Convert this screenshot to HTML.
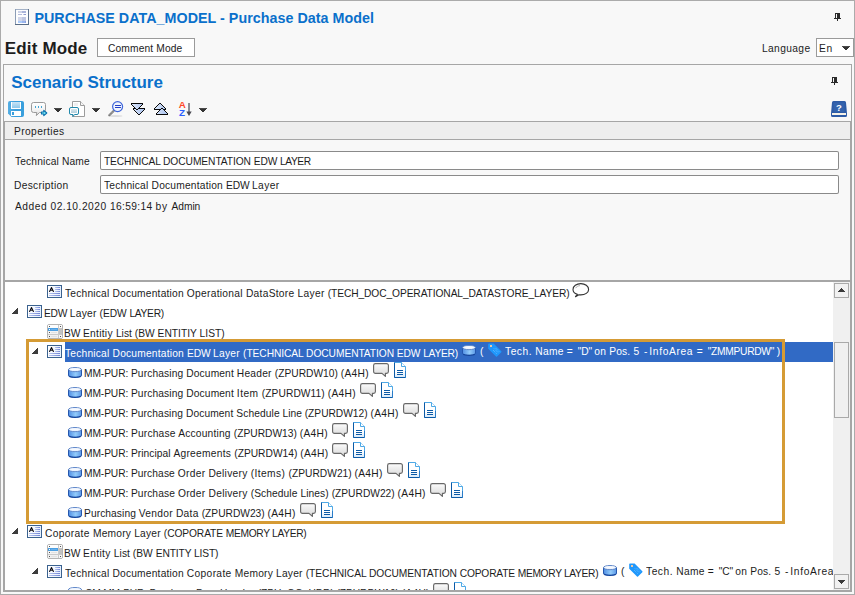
<!DOCTYPE html>
<html lang="en">
<head>
<meta charset="utf-8">
<title>PURCHASE DATA_MODEL - Purchase Data Model</title>
<style>
html,body{margin:0;padding:0}
body{width:855px;height:595px;overflow:hidden;background:#f8f8f8;font-family:"Liberation Sans",sans-serif;font-size:11px;position:relative}
div,ul,li{margin:0;padding:0;box-sizing:border-box}
.win,.hdr,.modebar,.panel,.toolbar,.propbox,.treebox,.tree,.sb,.btn,.sel,.inp,.selrow,.prophead,.hl,.sbb,.sbt{position:absolute}
.win{background:#f8f8f8;box-shadow:inset 0 0 0 1px #ababab;overflow:hidden}
.t{position:absolute;white-space:pre;line-height:20px;height:20px;color:#1c1c1c;transform:scaleX(.93);transform-origin:0 0}
.h1{font-size:14.3px;font-weight:bold;transform:none}
.h2{font-size:17px;font-weight:bold;transform:none}
.bl{color:#0a70cb}
.wh{color:#fff}
.i{position:absolute;overflow:visible}
button{margin:0;padding:0;border:0;font:inherit;display:block}
.btn{box-shadow:inset 0 0 0 1px #9a9a9a;background:#fff}
.sel{box-shadow:inset 0 0 0 1px #9a9a9a;background:#fff}
.inp{box-shadow:inset 0 0 0 1px #8a8a8a;border-radius:2px;background:#fff}
.panel{box-shadow:inset 0 0 0 1px #a6a6a6}
.propbox{box-shadow:inset 1px 1px 0 0 #a6a6a6,inset -1px 0 0 0 #a6a6a6}
.prophead{background:#eeeeee;box-shadow:inset 0 -1px 0 0 #a6a6a6}
.treebox{box-shadow:inset 0 2px 0 0 #a6a6a6,inset 0 0 0 1px #a6a6a6;background:#fff}
.tree{overflow:hidden;background:#fff}
.tree ul{list-style:none}
.selrow{background:#316ac5}
.hl{border:3px solid #d59b35}
.sb{background:#f0f0f0}
.sbb{box-shadow:inset 0 0 0 1px #a9a9a9;background:#f1f1f1}
.sbt{box-shadow:inset 0 0 0 1px #a9a9a9;background:#f0f0f0}
</style>
</head>
<body>
<svg width="0" height="0" style="position:absolute" aria-hidden="true"><defs><linearGradient id="gm1" x1="0" y1="0" x2="0" y2="1"><stop offset="0" stop-color="#ffffff"/><stop offset=".25" stop-color="#f2f2f2"/><stop offset="1" stop-color="#dadada"/></linearGradient><linearGradient id="gt1" gradientUnits="userSpaceOnUse" x1="0" y1="0" x2="14" y2="0"><stop offset="0" stop-color="#e4f0ff"/><stop offset=".45" stop-color="#c6d6f4"/><stop offset="1" stop-color="#a9c3f0"/></linearGradient><linearGradient id="gc1" x1="0" y1="0" x2="0" y2="1"><stop offset="0" stop-color="#ffffff"/><stop offset=".55" stop-color="#f4f4f4"/><stop offset="1" stop-color="#dcdcdc"/></linearGradient><linearGradient id="gp1" x1="0" y1="0" x2="0" y2="1"><stop offset="0" stop-color="#dbe8ee"/><stop offset="1" stop-color="#b3d0dd"/></linearGradient><linearGradient id="gy1" x1="0" y1="0" x2="1" y2="0"><stop offset="0" stop-color="#4f8de2"/><stop offset=".55" stop-color="#93ccfb"/><stop offset="1" stop-color="#5b97e6"/></linearGradient><linearGradient id="gd1" x1="0" y1="0" x2="0" y2="1"><stop offset="0" stop-color="#ffffff"/><stop offset=".6" stop-color="#ffffff"/><stop offset="1" stop-color="#d6e9fa"/></linearGradient><linearGradient id="gn1" x1="0" y1="0" x2="1" y2="0"><stop offset="0" stop-color="#b9c8f2"/><stop offset="1" stop-color="#6f82d4"/></linearGradient><linearGradient id="gn2" x1="0" y1="0" x2="1" y2="0"><stop offset="0" stop-color="#ffffff"/><stop offset="1" stop-color="#e4eefc"/></linearGradient><linearGradient id="gs1" x1="0" y1="0" x2="0" y2="1"><stop offset="0" stop-color="#c9e4f6"/><stop offset="1" stop-color="#8cc7ea"/></linearGradient><linearGradient id="gs2" x1="0" y1="0" x2="1" y2="0"><stop offset="0" stop-color="#55aee3"/><stop offset=".5" stop-color="#379cdb"/><stop offset="1" stop-color="#3aa0dd"/></linearGradient></defs></svg>
<div class="win" style="left:0px;top:0px;width:855px;height:595px">
<div class="hdr" style="left:1px;top:1px;width:853px;height:31px"><svg class="i" style="left:14px;top:8px" width="14" height="16" viewBox="0 0 14 16"><rect width="14" height="16" fill="#fdfdfe"/><path d="M0 0h14v1h-14z" fill="#a3b1c6" shape-rendering="crispEdges"/><path d="M0 0h1v16h-1z" fill="#8c9db6" shape-rendering="crispEdges"/><path d="M13 0h1v16h-1z" fill="#5c718d" shape-rendering="crispEdges"/><path d="M0 15h14v1h-14z" fill="#586c86" shape-rendering="crispEdges"/><path d="M3 2h4v2h-4z" fill="#cdd3e8" shape-rendering="crispEdges"/><path d="M7 2h4v2h-4z" fill="#aab4da" shape-rendering="crispEdges"/><path d="M3 5h4v1h-4z" fill="#b3bbdb" shape-rendering="crispEdges"/><path d="M8 5h1v1h-1z" fill="#c3cae4" shape-rendering="crispEdges"/><path d="M9 5h2v1h-2z" fill="#8f9cd1" shape-rendering="crispEdges"/><path d="M3 8h4v4h-4z" fill="#d2d7ea" shape-rendering="crispEdges"/><path d="M7 8h4v4h-4z" fill="#bfc6e1" shape-rendering="crispEdges"/><path d="M3 12h4v2h-4z" fill="#abcbfa" shape-rendering="crispEdges"/><path d="M7 12h3v2h-3z" fill="#9ab5ee" shape-rendering="crispEdges"/><path d="M10 12h1v2h-1z" fill="#8a9fe0" shape-rendering="crispEdges"/></svg><span class="t h1 bl" style="left:33.4px;top:7px;letter-spacing:0.03px">PURCHASE DATA_MODEL - Purchase Data Model</span><svg class="i" style="left:833px;top:12px" width="7" height="8" viewBox="0 0 7 8"><path d="M1 0h5v1h-5zM1 1h1v4h-1zM3 1h3v4h-3zM0 5h7v1h-7zM3 6h1v2h-1z" fill="#2b2b2b" shape-rendering="crispEdges"/></svg></div>
<div class="modebar" style="left:1px;top:32px;width:853px;height:30px"><span class="t h2" style="left:3.8px;top:7px;letter-spacing:0.15px">Edit Mode</span><button class="btn" style="left:96px;top:6px;width:98px;height:19px"><span class="t" style="left:11.1px;top:0px;letter-spacing:0.14px">Comment Mode</span></button><span class="t" style="left:761.2px;top:6px;letter-spacing:0.4px">Language</span><div class="sel" style="left:815px;top:6px;width:38px;height:19px"><span class="t" style="left:3.2px;top:0px;letter-spacing:0.67px">En</span><svg class="i" style="left:26px;top:8px" width="8" height="4" viewBox="0 0 8 4"><path d="M0 0h8v1h-8z" fill="#4a4a4a" shape-rendering="crispEdges"/><path d="M1 1h6v1h-6zM2 2h4v1h-4zM3 3h2v1h-2z" fill="#333" shape-rendering="crispEdges"/></svg></div></div>
<div class="panel" style="left:3px;top:64px;width:849px;height:528px">
<span class="t h2 bl" style="left:8.3px;top:9px;letter-spacing:-0.03px">Scenario Structure</span><svg class="i" style="left:828px;top:13px" width="7" height="8" viewBox="0 0 7 8"><path d="M1 0h5v1h-5zM1 1h1v4h-1zM3 1h3v4h-3zM0 5h7v1h-7zM3 6h1v2h-1z" fill="#2b2b2b" shape-rendering="crispEdges"/></svg>
<div class="toolbar" style="left:1px;top:34px;width:847px;height:22px"><svg class="i" style="left:4px;top:3px" width="16" height="16" viewBox="0 0 16 16"><path d="M2 0h12a2 2 0 0 1 2 2v12a2 2 0 0 1-2 2H3.500L0 12.500V2a2 2 0 0 1 2-2z" fill="url(#gs2)"/><path d="M3 1h10v7H3z" fill="#fff"/><path d="M4 1h8v6H4z" fill="url(#gs1)"/><path d="M3 10h10v5H3z" fill="#fff"/><path d="M4 11h2v3H4z" fill="#3a9edc"/></svg><svg class="i" style="left:27px;top:4px" width="17" height="15" viewBox="0 0 17 15"><path d="M2.500 .5h10a2 2 0 0 1 2 2v6a2 2 0 0 1-2 2H8.500L5.300 13.600L5.800 10.500H2.500a2 2 0 0 1-2-2v-6a2 2 0 0 1 2-2z" fill="url(#gc1)" stroke="#9a9a9a"/><path d="M4 4h1v2h-1zM7 4h1v2h-1zM10 4h1v2h-1z" fill="#45a5d3" shape-rendering="crispEdges"/><path d="M10.500 10h2.300V8.300l3 2.700l-3 2.700V12h-2.300z" fill="#7eeef4" stroke="#0b6fae" stroke-width="1.100" stroke-linejoin="round"/></svg><svg class="i" style="left:50px;top:10px" width="8" height="4" viewBox="0 0 8 4"><path d="M0 0h8v1h-8z" fill="#4a4a4a" shape-rendering="crispEdges"/><path d="M1 1h6v1h-6zM2 2h4v1h-4zM3 3h2v1h-2z" fill="#333" shape-rendering="crispEdges"/></svg><svg class="i" style="left:65px;top:3px" width="16" height="16" viewBox="0 0 16 16"><path d="M3.500 .5h8l4 4v11h-12z" fill="#fff" stroke="#9c9c9c"/><path d="M11.500 .5v4h4" fill="#f6f6f6" stroke="#9c9c9c"/><rect x="5" y="2" width="4" height="3" fill="#efefef"/><path d="M2 6.500h6a1.500 1.500 0 0 1 1.500 1.500v4a1.500 1.500 0 0 1-1.500 1.500H5.500L4 15.500V13.500H2a1.500 1.500 0 0 1-1.500-1.500v-4A1.500 1.500 0 0 1 2 6.500z" fill="#fff" stroke="#2088ab"/><rect x="2" y="8" width="6" height="4" fill="url(#gp1)"/></svg><svg class="i" style="left:88px;top:10px" width="8" height="4" viewBox="0 0 8 4"><path d="M0 0h8v1h-8z" fill="#4a4a4a" shape-rendering="crispEdges"/><path d="M1 1h6v1h-6zM2 2h4v1h-4zM3 3h2v1h-2z" fill="#333" shape-rendering="crispEdges"/></svg><svg class="i" style="left:104px;top:3px" width="16" height="16" viewBox="0 0 16 16"><ellipse cx="7.500" cy="15" rx="7" ry="1" fill="#000" opacity=".10"/><path d="M5.800 9.700L1.300 14.200" stroke="#7d7d7d" stroke-width="2.200" stroke-linecap="round"/><path d="M5.500 10L1.500 14" stroke="#d8d8d8" stroke-width=".8" stroke-dasharray="1 1"/><circle cx="9.600" cy="5.600" r="5" fill="#f1f5fc" stroke="#3f66da" stroke-width="1.200"/><path d="M7 4h6v1h-6zM7 6h6v1h-6z" fill="#2340c8" shape-rendering="crispEdges"/></svg><svg class="i" style="left:127px;top:5px" width="14" height="12" viewBox="0 0 14 12"><path d="M3 6h10v1h-10zM4 7h8v1h-8zM5 8h6v1h-6zM6 9h4v1h-4zM7 10h2v1h-2z" fill="url(#gt1)" shape-rendering="crispEdges"/><path d="M2 5h12v1h-12zM2 6h1v1h-1zM13 6h1v1h-1zM3 7h1v1h-1zM12 7h1v1h-1zM4 8h1v1h-1zM11 8h1v1h-1zM5 9h1v1h-1zM10 9h1v1h-1zM6 10h1v1h-1zM9 10h1v1h-1zM7 11h1v1h-1zM8 11h1v1h-1z" fill="#0a0a0a" shape-rendering="crispEdges"/><path d="M1 1h10v1h-10zM2 2h8v1h-8zM3 3h6v1h-6zM4 4h4v1h-4zM5 5h2v1h-2z" fill="url(#gt1)" shape-rendering="crispEdges"/><path d="M0 0h12v1h-12zM0 1h1v1h-1zM11 1h1v1h-1zM1 2h1v1h-1zM10 2h1v1h-1zM2 3h1v1h-1zM9 3h1v1h-1zM3 4h1v1h-1zM8 4h1v1h-1zM4 5h1v1h-1zM7 5h1v1h-1zM5 6h1v1h-1zM6 6h1v1h-1z" fill="#0a0a0a" shape-rendering="crispEdges"/></svg><svg class="i" style="left:150px;top:5px" width="14" height="12" viewBox="0 0 14 12"><path d="M5 1h2v1h-2zM4 2h4v1h-4zM3 3h6v1h-6zM2 4h8v1h-8zM1 5h10v1h-10z" fill="url(#gt1)" shape-rendering="crispEdges"/><path d="M5 0h1v1h-1zM6 0h1v1h-1zM4 1h1v1h-1zM7 1h1v1h-1zM3 2h1v1h-1zM8 2h1v1h-1zM2 3h1v1h-1zM9 3h1v1h-1zM1 4h1v1h-1zM10 4h1v1h-1zM0 5h1v1h-1zM11 5h1v1h-1zM0 6h12v1h-12z" fill="#0a0a0a" shape-rendering="crispEdges"/><path d="M7 6h2v1h-2zM6 7h4v1h-4zM5 8h6v1h-6zM4 9h8v1h-8zM3 10h10v1h-10z" fill="url(#gt1)" shape-rendering="crispEdges"/><path d="M7 5h1v1h-1zM8 5h1v1h-1zM6 6h1v1h-1zM9 6h1v1h-1zM5 7h1v1h-1zM10 7h1v1h-1zM4 8h1v1h-1zM11 8h1v1h-1zM3 9h1v1h-1zM12 9h1v1h-1zM2 10h1v1h-1zM13 10h1v1h-1zM2 11h12v1h-12z" fill="#0a0a0a" shape-rendering="crispEdges"/></svg><svg class="i" style="left:175px;top:3px" width="14" height="16" viewBox="0 0 14 16"><text x="-.2" y="7" font-family="Liberation Sans, sans-serif" font-weight="bold" font-size="9.800" fill="#ff4526">A</text><text x="0" y="15" font-family="Liberation Sans, sans-serif" font-weight="bold" font-size="9.800" fill="#2c5eff">Z</text><path d="M9 2h2v9h-2z" fill="#8c8c94" shape-rendering="crispEdges"/><path d="M7.300 10.500h5.400L10 15z" fill="#4a4a52"/></svg><svg class="i" style="left:195px;top:10px" width="8" height="4" viewBox="0 0 8 4"><path d="M0 0h8v1h-8z" fill="#4a4a4a" shape-rendering="crispEdges"/><path d="M1 1h6v1h-6zM2 2h4v1h-4zM3 3h2v1h-2z" fill="#333" shape-rendering="crispEdges"/></svg><svg class="i" style="left:827px;top:3px" width="16" height="16" viewBox="0 0 16 16"><path d="M2.500 0h11a1.500 1.500 0 0 1 1.500 1.500L16 12.500v2a1.500 1.500 0 0 1-1.500 1.500h-13A1.500 1.500 0 0 1 0 14.500v-2L1 1.500A1.500 1.500 0 0 1 2.500 0z" fill="#2d5ba6"/><path d="M2.500 1.500h11v9.500h-11z" fill="#3463ad"/><path d="M1 12h14v2H1z" fill="#f6f2e8"/><text x="8" y="10" text-anchor="middle" font-family="Liberation Sans, sans-serif" font-weight="bold" font-size="9.500" fill="#fff">?</text></svg></div>
<div class="propbox" style="left:1px;top:57px;width:847px;height:160px">
<div class="prophead" style="left:1px;top:1px;width:845px;height:18px"><span class="t" style="left:9.2px;top:-1px;letter-spacing:0.42px">Properties</span></div>
<span class="t" style="left:10.6px;top:30px;letter-spacing:0.16px">Technical Name</span><div class="inp" style="left:96px;top:30px;width:739px;height:19px"><span class="t" style="left:4.1px;top:0px"><span style="letter-spacing:-0.15px">TECHNICAL </span><span style="letter-spacing:-0.08px">DOCUMENTATION EDW </span><span style="letter-spacing:-0.48px">LAYER</span></span></div>
<span class="t" style="left:10.2px;top:54px;letter-spacing:0.32px">Description</span><div class="inp" style="left:96px;top:54px;width:739px;height:19px"><span class="t" style="left:4.1px;top:0px"><span style="letter-spacing:0.22px">Technical Documentation </span><span style="letter-spacing:-0.19px">EDW </span><span style="letter-spacing:0.38px">Layer</span></span></div>
<span class="t" style="left:10.7px;top:75px"><span style="letter-spacing:0.54px">Added 02.10.2020 </span><span style="letter-spacing:0.35px">16:59:14 </span><span style="letter-spacing:0.83px">by </span><span style="letter-spacing:-0.08px">Admin</span></span>
</div>
<div class="treebox" style="left:1px;top:216px;width:847px;height:311px">
<div class="tree" style="left:1px;top:2px;width:828px;height:308px">
<div class="selrow" style="left:60px;top:60px;width:768px;height:20px"></div>
<ul>
<li><svg class="i" style="left:42px;top:3px" width="15" height="13" viewBox="0 0 15 13"><rect x=".5" y=".5" width="14" height="12" fill="url(#gn2)" stroke="#3b628f"/><rect x="8" y="2" width="5" height="1" fill="url(#gn1)"/><rect x="8" y="4" width="5" height="1" fill="url(#gn1)"/><rect x="8" y="6" width="5" height="1" fill="url(#gn1)"/><rect x="2" y="8" width="11" height="1" fill="url(#gn1)"/><rect x="2" y="10" width="11" height="1" fill="url(#gn1)"/><path d="M2.600 6.400L4.500 2.600L6.400 6.400M3.400 5.200h2.200" fill="none" stroke="#0c0c14" stroke-width="1.100" stroke-linejoin="round" stroke-linecap="round"/></svg><span class="t" style="left:59.6px;top:1px"><span style="letter-spacing:0.21px">Technical Documentation </span><span style="letter-spacing:0.3px">Operational DataStore Layer </span><span style="letter-spacing:-0.11px">(TECH_DOC_OPERATIONAL_DATASTORE_LAYER)</span></span><svg class="i" style="left:567px;top:1px" width="17" height="15" viewBox="0 0 17 15"><path d="M5.300 11.300C2.600 10.400 1 8.500 1 6.400C1 3.200 4.500 .6 8.800 .6s7.800 2.600 7.800 5.800s-3.500 5.500-7.800 5.500c-.7 0-1.300 0-1.900-.2L3.500 13.700z" fill="#fff" stroke="#333" stroke-width="1.100" stroke-linejoin="round"/><path d="M3.500 5.200C4.500 3.600 6.200 2.800 8 2.600" fill="none" stroke="#9a9a9a" stroke-width=".8"/></svg></li>
<li><svg class="i" style="left:7px;top:26px" width="6" height="6" viewBox="0 0 6 6"><path d="M5 0h1v1h-1zM4 1h2v1h-2zM3 2h3v1h-3zM2 3h4v1h-4zM1 4h5v1h-5zM0 5h6v1h-6z" fill="#3c3c3c" shape-rendering="crispEdges"/></svg><svg class="i" style="left:22px;top:23px" width="15" height="13" viewBox="0 0 15 13"><rect x=".5" y=".5" width="14" height="12" fill="url(#gn2)" stroke="#3b628f"/><rect x="8" y="2" width="5" height="1" fill="url(#gn1)"/><rect x="8" y="4" width="5" height="1" fill="url(#gn1)"/><rect x="8" y="6" width="5" height="1" fill="url(#gn1)"/><rect x="2" y="8" width="11" height="1" fill="url(#gn1)"/><rect x="2" y="10" width="11" height="1" fill="url(#gn1)"/><path d="M2.600 6.400L4.500 2.600L6.400 6.400M3.400 5.200h2.200" fill="none" stroke="#0c0c14" stroke-width="1.100" stroke-linejoin="round" stroke-linecap="round"/></svg><span class="t" style="left:39.2px;top:21px"><span style="letter-spacing:-0.24px">EDW </span><span style="letter-spacing:0.24px">Layer </span><span style="letter-spacing:-0.07px">(EDW </span><span style="letter-spacing:-0.31px">LAYER)</span></span></li>
<li><svg class="i" style="left:42px;top:42px" width="16" height="15" viewBox="0 0 16 15"><rect x=".5" y=".5" width="15" height="14" rx="1.500" fill="#c9c9c9" stroke="#b4b4b4"/><rect x="1" y="1" width="10" height="3" fill="#fdfdfd"/><rect x="1" y="4" width="10" height="3" fill="#4b9fe2"/><rect x="1" y="7" width="10" height="3" fill="#f3f3f3"/><rect x="1" y="11" width="10" height="3" fill="#f0f0f0"/><rect x="12" y="1" width="3" height="3" fill="#fbfbfb"/><rect x="12" y="4" width="3" height="6" fill="#c2c2c2"/><rect x="12" y="11" width="3" height="3" fill="#f6f6f6"/><path d="M2 2h1v1h-1zM2 8h1v1h-1zM2 12h1v1h-1zM13 2h1v1h-1zM13 12h1v1h-1z" fill="#555" shape-rendering="crispEdges"/><path d="M2 5h1v1h-1z" fill="#fff" shape-rendering="crispEdges"/><path d="M4 8h6v1h-6zM4 12h6v1h-6z" fill="#e2e2e2" shape-rendering="crispEdges"/><path d="M4 5h6v1h-6z" fill="#69b0ea" shape-rendering="crispEdges"/></svg><span class="t" style="left:59.3px;top:41px"><span style="letter-spacing:-0.13px">BW </span><span style="letter-spacing:0.3px">Entitiy </span><span style="letter-spacing:0.02px">List (BW ENTITIY LIST)</span></span></li>
<li><svg class="i" style="left:27px;top:66px" width="6" height="6" viewBox="0 0 6 6"><path d="M5 0h1v1h-1zM4 1h2v1h-2zM3 2h3v1h-3zM2 3h4v1h-4zM1 4h5v1h-5zM0 5h6v1h-6z" fill="#3c3c3c" shape-rendering="crispEdges"/></svg><svg class="i" style="left:42px;top:63px" width="15" height="13" viewBox="0 0 15 13"><rect x=".5" y=".5" width="14" height="12" fill="url(#gn2)" stroke="#3b628f"/><rect x="8" y="2" width="5" height="1" fill="url(#gn1)"/><rect x="8" y="4" width="5" height="1" fill="url(#gn1)"/><rect x="8" y="6" width="5" height="1" fill="url(#gn1)"/><rect x="2" y="8" width="11" height="1" fill="url(#gn1)"/><rect x="2" y="10" width="11" height="1" fill="url(#gn1)"/><path d="M2.600 6.400L4.500 2.600L6.400 6.400M3.400 5.200h2.200" fill="none" stroke="#0c0c14" stroke-width="1.100" stroke-linejoin="round" stroke-linecap="round"/></svg><span class="t wh" style="left:59.6px;top:61px"><span style="letter-spacing:0.22px">Technical Documentation </span><span style="letter-spacing:-0.19px">EDW </span><span style="letter-spacing:0.28px">Layer </span><span style="letter-spacing:-0.08px">(TECHNICAL DOCUMENTATION EDW </span><span style="letter-spacing:-0.26px">LAYER)</span></span><svg class="i" style="left:457px;top:63px" width="14" height="11" viewBox="0 0 14 11"><path d="M.5 2.500v6.200c0 1 2.900 1.800 6.500 1.800s6.500-.8 6.500-1.800V2.500z" fill="url(#gy1)" stroke="#2456ad"/><path d="M1 9c1.200 .8 3.300 1.200 6 1.200s4.800-.4 6-1.200" fill="none" stroke="#0f3f97" stroke-width="1"/><ellipse cx="7" cy="2.600" rx="6.500" ry="2.100" fill="#e6effc" stroke="#5f87c9"/><ellipse cx="7" cy="2.300" rx="5" ry="1.100" fill="#f6f9fe"/></svg><span class="t wh" style="left:474.9px;top:59px">(</span><svg class="i" style="left:483px;top:61px" width="14" height="14" viewBox="0 0 14 14"><path d="M.2 1.300A.8 .8 0 0 1 1 .5H5.600L13.300 8.200a.7 .7 0 0 1 0 1L9 13.500a.7 .7 0 0 1-1 0L.2 5.800z" fill="#1f97fb"/><path d="M6 5.500L10.500 10M5 7L9 11M7.500 5L11.500 9" stroke="#74c4ff" stroke-width=".9" stroke-dasharray="1 1" fill="none"/><rect x="2" y="2" width="2" height="2" fill="#f0c6a4"/></svg><span class="t wh" style="left:500.2px;top:59px"><span style="letter-spacing:0.55px">Tech. </span><span style="letter-spacing:0.29px">Name </span><span style="letter-spacing:1.17px">= </span><span style="letter-spacing:-0.27px">"D" </span><span style="letter-spacing:0.2px">on Pos. </span><span style="letter-spacing:1.05px">5 </span><span style="letter-spacing:-0.41px">- </span><span style="letter-spacing:0.69px">InfoArea </span><span style="letter-spacing:1.17px">= </span><span style="letter-spacing:-0.3px">"ZMMPURDW" )</span></span></li>
<li><svg class="i" style="left:63px;top:85px" width="14" height="11" viewBox="0 0 14 11"><path d="M.5 2.500v6.200c0 1 2.900 1.800 6.500 1.800s6.500-.8 6.500-1.800V2.500z" fill="url(#gy1)" stroke="#2456ad"/><path d="M1 9c1.200 .8 3.300 1.200 6 1.200s4.800-.4 6-1.200" fill="none" stroke="#0f3f97" stroke-width="1"/><ellipse cx="7" cy="2.600" rx="6.500" ry="2.100" fill="#e6effc" stroke="#5f87c9"/><ellipse cx="7" cy="2.300" rx="5" ry="1.100" fill="#f6f9fe"/></svg><span class="t" style="left:79.3px;top:81px"><span style="letter-spacing:-0.11px">MM-PUR: </span><span style="letter-spacing:0.13px">Purchasing Document </span><span style="letter-spacing:0.24px">Header </span>(ZPURDW10) <span style="letter-spacing:0.33px">(A4H)</span></span><svg class="i" style="left:368px;top:81px" width="17" height="15" viewBox="0 0 17 15"><path d="M2.400 .6h11.200a1.800 1.800 0 0 1 1.800 1.800v6.200a1.800 1.800 0 0 1-1.800 1.800H12.400V13.400L9 10.400H2.400a1.800 1.800 0 0 1-1.800-1.800V2.400a1.800 1.800 0 0 1 1.800-1.800z" fill="url(#gm1)" stroke="#686868" stroke-width="1.150" stroke-linejoin="round"/></svg><svg class="i" style="left:389px;top:80px" width="12" height="16" viewBox="0 0 12 16"><path d="M.5 .5h7l4 4v11H.5z" fill="url(#gd1)" stroke="#4ea9e6"/><path d="M7.500 .5v4h4" fill="#fff" stroke="#4ea9e6"/><path d="M.5 .5v15h11" fill="none" stroke="#0c5aa6"/><path d="M11.500 15.500V9" fill="none" stroke="#2a7cc8"/><path d="M3 8h6v1h-6zM3 10h6v1h-6zM3 12h6v1h-6z" fill="#0c5aa6" shape-rendering="crispEdges"/></svg></li>
<li><svg class="i" style="left:63px;top:105px" width="14" height="11" viewBox="0 0 14 11"><path d="M.5 2.500v6.200c0 1 2.900 1.800 6.500 1.800s6.500-.8 6.500-1.800V2.500z" fill="url(#gy1)" stroke="#2456ad"/><path d="M1 9c1.200 .8 3.300 1.200 6 1.200s4.800-.4 6-1.200" fill="none" stroke="#0f3f97" stroke-width="1"/><ellipse cx="7" cy="2.600" rx="6.500" ry="2.100" fill="#e6effc" stroke="#5f87c9"/><ellipse cx="7" cy="2.300" rx="5" ry="1.100" fill="#f6f9fe"/></svg><span class="t" style="left:79.3px;top:101px"><span style="letter-spacing:-0.11px">MM-PUR: </span><span style="letter-spacing:0.13px">Purchasing Document </span><span style="letter-spacing:0.48px">Item </span><span style="letter-spacing:0.07px">(ZPURDW11) </span><span style="letter-spacing:0.33px">(A4H)</span></span><svg class="i" style="left:355px;top:101px" width="17" height="15" viewBox="0 0 17 15"><path d="M2.400 .6h11.200a1.800 1.800 0 0 1 1.800 1.800v6.200a1.800 1.800 0 0 1-1.800 1.800H12.400V13.400L9 10.400H2.400a1.800 1.800 0 0 1-1.800-1.800V2.400a1.800 1.800 0 0 1 1.800-1.800z" fill="url(#gm1)" stroke="#686868" stroke-width="1.150" stroke-linejoin="round"/></svg><svg class="i" style="left:376px;top:100px" width="12" height="16" viewBox="0 0 12 16"><path d="M.5 .5h7l4 4v11H.5z" fill="url(#gd1)" stroke="#4ea9e6"/><path d="M7.500 .5v4h4" fill="#fff" stroke="#4ea9e6"/><path d="M.5 .5v15h11" fill="none" stroke="#0c5aa6"/><path d="M11.500 15.500V9" fill="none" stroke="#2a7cc8"/><path d="M3 8h6v1h-6zM3 10h6v1h-6zM3 12h6v1h-6z" fill="#0c5aa6" shape-rendering="crispEdges"/></svg></li>
<li><svg class="i" style="left:63px;top:125px" width="14" height="11" viewBox="0 0 14 11"><path d="M.5 2.500v6.200c0 1 2.900 1.800 6.500 1.800s6.500-.8 6.500-1.800V2.500z" fill="url(#gy1)" stroke="#2456ad"/><path d="M1 9c1.200 .8 3.300 1.200 6 1.200s4.800-.4 6-1.200" fill="none" stroke="#0f3f97" stroke-width="1"/><ellipse cx="7" cy="2.600" rx="6.500" ry="2.100" fill="#e6effc" stroke="#5f87c9"/><ellipse cx="7" cy="2.300" rx="5" ry="1.100" fill="#f6f9fe"/></svg><span class="t" style="left:79.3px;top:121px"><span style="letter-spacing:-0.11px">MM-PUR: </span><span style="letter-spacing:0.1px">Purchasing Document Schedule </span><span style="letter-spacing:-0.02px">Line (ZPURDW12) </span><span style="letter-spacing:0.33px">(A4H)</span></span><svg class="i" style="left:398px;top:121px" width="17" height="15" viewBox="0 0 17 15"><path d="M2.400 .6h11.200a1.800 1.800 0 0 1 1.800 1.800v6.200a1.800 1.800 0 0 1-1.800 1.800H12.400V13.400L9 10.400H2.400a1.800 1.800 0 0 1-1.800-1.800V2.400a1.800 1.800 0 0 1 1.800-1.800z" fill="url(#gm1)" stroke="#686868" stroke-width="1.150" stroke-linejoin="round"/></svg><svg class="i" style="left:419px;top:120px" width="12" height="16" viewBox="0 0 12 16"><path d="M.5 .5h7l4 4v11H.5z" fill="url(#gd1)" stroke="#4ea9e6"/><path d="M7.500 .5v4h4" fill="#fff" stroke="#4ea9e6"/><path d="M.5 .5v15h11" fill="none" stroke="#0c5aa6"/><path d="M11.500 15.500V9" fill="none" stroke="#2a7cc8"/><path d="M3 8h6v1h-6zM3 10h6v1h-6zM3 12h6v1h-6z" fill="#0c5aa6" shape-rendering="crispEdges"/></svg></li>
<li><svg class="i" style="left:63px;top:145px" width="14" height="11" viewBox="0 0 14 11"><path d="M.5 2.500v6.200c0 1 2.900 1.800 6.500 1.800s6.500-.8 6.500-1.800V2.500z" fill="url(#gy1)" stroke="#2456ad"/><path d="M1 9c1.200 .8 3.300 1.200 6 1.200s4.800-.4 6-1.200" fill="none" stroke="#0f3f97" stroke-width="1"/><ellipse cx="7" cy="2.600" rx="6.500" ry="2.100" fill="#e6effc" stroke="#5f87c9"/><ellipse cx="7" cy="2.300" rx="5" ry="1.100" fill="#f6f9fe"/></svg><span class="t" style="left:79.3px;top:141px"><span style="letter-spacing:-0.11px">MM-PUR: </span><span style="letter-spacing:0.21px">Purchase Accounting </span>(ZPURDW13) <span style="letter-spacing:0.33px">(A4H)</span></span><svg class="i" style="left:327px;top:141px" width="17" height="15" viewBox="0 0 17 15"><path d="M2.400 .6h11.200a1.800 1.800 0 0 1 1.800 1.800v6.200a1.800 1.800 0 0 1-1.800 1.800H12.400V13.400L9 10.400H2.400a1.800 1.800 0 0 1-1.800-1.800V2.400a1.800 1.800 0 0 1 1.800-1.800z" fill="url(#gm1)" stroke="#686868" stroke-width="1.150" stroke-linejoin="round"/></svg><svg class="i" style="left:348px;top:140px" width="12" height="16" viewBox="0 0 12 16"><path d="M.5 .5h7l4 4v11H.5z" fill="url(#gd1)" stroke="#4ea9e6"/><path d="M7.500 .5v4h4" fill="#fff" stroke="#4ea9e6"/><path d="M.5 .5v15h11" fill="none" stroke="#0c5aa6"/><path d="M11.500 15.500V9" fill="none" stroke="#2a7cc8"/><path d="M3 8h6v1h-6zM3 10h6v1h-6zM3 12h6v1h-6z" fill="#0c5aa6" shape-rendering="crispEdges"/></svg></li>
<li><svg class="i" style="left:63px;top:165px" width="14" height="11" viewBox="0 0 14 11"><path d="M.5 2.500v6.200c0 1 2.900 1.800 6.500 1.800s6.500-.8 6.500-1.800V2.500z" fill="url(#gy1)" stroke="#2456ad"/><path d="M1 9c1.200 .8 3.300 1.200 6 1.200s4.800-.4 6-1.200" fill="none" stroke="#0f3f97" stroke-width="1"/><ellipse cx="7" cy="2.600" rx="6.500" ry="2.100" fill="#e6effc" stroke="#5f87c9"/><ellipse cx="7" cy="2.300" rx="5" ry="1.100" fill="#f6f9fe"/></svg><span class="t" style="left:79.3px;top:161px"><span style="letter-spacing:-0.11px">MM-PUR: </span><span style="letter-spacing:0.04px">Principal </span><span style="letter-spacing:0.28px">Agreements </span>(ZPURDW14) <span style="letter-spacing:0.33px">(A4H)</span></span><svg class="i" style="left:327px;top:161px" width="17" height="15" viewBox="0 0 17 15"><path d="M2.400 .6h11.200a1.800 1.800 0 0 1 1.800 1.800v6.200a1.800 1.800 0 0 1-1.800 1.800H12.400V13.400L9 10.400H2.400a1.800 1.800 0 0 1-1.800-1.800V2.400a1.800 1.800 0 0 1 1.800-1.800z" fill="url(#gm1)" stroke="#686868" stroke-width="1.150" stroke-linejoin="round"/></svg><svg class="i" style="left:348px;top:160px" width="12" height="16" viewBox="0 0 12 16"><path d="M.5 .5h7l4 4v11H.5z" fill="url(#gd1)" stroke="#4ea9e6"/><path d="M7.500 .5v4h4" fill="#fff" stroke="#4ea9e6"/><path d="M.5 .5v15h11" fill="none" stroke="#0c5aa6"/><path d="M11.500 15.500V9" fill="none" stroke="#2a7cc8"/><path d="M3 8h6v1h-6zM3 10h6v1h-6zM3 12h6v1h-6z" fill="#0c5aa6" shape-rendering="crispEdges"/></svg></li>
<li><svg class="i" style="left:63px;top:185px" width="14" height="11" viewBox="0 0 14 11"><path d="M.5 2.500v6.200c0 1 2.900 1.800 6.500 1.800s6.500-.8 6.500-1.800V2.500z" fill="url(#gy1)" stroke="#2456ad"/><path d="M1 9c1.200 .8 3.300 1.200 6 1.200s4.800-.4 6-1.200" fill="none" stroke="#0f3f97" stroke-width="1"/><ellipse cx="7" cy="2.600" rx="6.500" ry="2.100" fill="#e6effc" stroke="#5f87c9"/><ellipse cx="7" cy="2.300" rx="5" ry="1.100" fill="#f6f9fe"/></svg><span class="t" style="left:79.3px;top:181px"><span style="letter-spacing:-0.11px">MM-PUR: </span><span style="letter-spacing:0.1px">Purchase </span><span style="letter-spacing:0.29px">Order Delivery </span><span style="letter-spacing:0.44px">(Items) </span>(ZPURDW21) <span style="letter-spacing:0.33px">(A4H)</span></span><svg class="i" style="left:382px;top:181px" width="17" height="15" viewBox="0 0 17 15"><path d="M2.400 .6h11.200a1.800 1.800 0 0 1 1.800 1.800v6.200a1.800 1.800 0 0 1-1.800 1.800H12.400V13.400L9 10.400H2.400a1.800 1.800 0 0 1-1.800-1.800V2.400a1.800 1.800 0 0 1 1.800-1.800z" fill="url(#gm1)" stroke="#686868" stroke-width="1.150" stroke-linejoin="round"/></svg><svg class="i" style="left:403px;top:180px" width="12" height="16" viewBox="0 0 12 16"><path d="M.5 .5h7l4 4v11H.5z" fill="url(#gd1)" stroke="#4ea9e6"/><path d="M7.500 .5v4h4" fill="#fff" stroke="#4ea9e6"/><path d="M.5 .5v15h11" fill="none" stroke="#0c5aa6"/><path d="M11.500 15.500V9" fill="none" stroke="#2a7cc8"/><path d="M3 8h6v1h-6zM3 10h6v1h-6zM3 12h6v1h-6z" fill="#0c5aa6" shape-rendering="crispEdges"/></svg></li>
<li><svg class="i" style="left:63px;top:205px" width="14" height="11" viewBox="0 0 14 11"><path d="M.5 2.500v6.200c0 1 2.900 1.800 6.500 1.800s6.500-.8 6.500-1.800V2.500z" fill="url(#gy1)" stroke="#2456ad"/><path d="M1 9c1.200 .8 3.300 1.200 6 1.200s4.800-.4 6-1.200" fill="none" stroke="#0f3f97" stroke-width="1"/><ellipse cx="7" cy="2.600" rx="6.500" ry="2.100" fill="#e6effc" stroke="#5f87c9"/><ellipse cx="7" cy="2.300" rx="5" ry="1.100" fill="#f6f9fe"/></svg><span class="t" style="left:79.3px;top:201px"><span style="letter-spacing:-0.11px">MM-PUR: </span><span style="letter-spacing:0.11px">Purchase </span><span style="letter-spacing:0.29px">Order Delivery </span><span style="letter-spacing:0.08px">(Schedule Lines) </span>(ZPURDW22) <span style="letter-spacing:0.33px">(A4H)</span></span><svg class="i" style="left:425px;top:201px" width="17" height="15" viewBox="0 0 17 15"><path d="M2.400 .6h11.200a1.800 1.800 0 0 1 1.800 1.800v6.200a1.800 1.800 0 0 1-1.800 1.800H12.400V13.400L9 10.400H2.400a1.800 1.800 0 0 1-1.800-1.800V2.400a1.800 1.800 0 0 1 1.800-1.800z" fill="url(#gm1)" stroke="#686868" stroke-width="1.150" stroke-linejoin="round"/></svg><svg class="i" style="left:446px;top:200px" width="12" height="16" viewBox="0 0 12 16"><path d="M.5 .5h7l4 4v11H.5z" fill="url(#gd1)" stroke="#4ea9e6"/><path d="M7.500 .5v4h4" fill="#fff" stroke="#4ea9e6"/><path d="M.5 .5v15h11" fill="none" stroke="#0c5aa6"/><path d="M11.500 15.500V9" fill="none" stroke="#2a7cc8"/><path d="M3 8h6v1h-6zM3 10h6v1h-6zM3 12h6v1h-6z" fill="#0c5aa6" shape-rendering="crispEdges"/></svg></li>
<li><svg class="i" style="left:63px;top:225px" width="14" height="11" viewBox="0 0 14 11"><path d="M.5 2.500v6.200c0 1 2.900 1.800 6.500 1.800s6.500-.8 6.500-1.800V2.500z" fill="url(#gy1)" stroke="#2456ad"/><path d="M1 9c1.200 .8 3.300 1.200 6 1.200s4.800-.4 6-1.200" fill="none" stroke="#0f3f97" stroke-width="1"/><ellipse cx="7" cy="2.600" rx="6.500" ry="2.100" fill="#e6effc" stroke="#5f87c9"/><ellipse cx="7" cy="2.300" rx="5" ry="1.100" fill="#f6f9fe"/></svg><span class="t" style="left:79.3px;top:221px"><span style="letter-spacing:0.08px">Purchasing </span><span style="letter-spacing:0.28px">Vendor Data </span><span style="letter-spacing:-0.01px">(ZPURDW23) </span><span style="letter-spacing:0.33px">(A4H)</span></span><svg class="i" style="left:295px;top:221px" width="17" height="15" viewBox="0 0 17 15"><path d="M2.400 .6h11.200a1.800 1.800 0 0 1 1.800 1.800v6.200a1.800 1.800 0 0 1-1.800 1.800H12.400V13.400L9 10.400H2.400a1.800 1.800 0 0 1-1.800-1.800V2.400a1.800 1.800 0 0 1 1.800-1.800z" fill="url(#gm1)" stroke="#686868" stroke-width="1.150" stroke-linejoin="round"/></svg><svg class="i" style="left:316px;top:220px" width="12" height="16" viewBox="0 0 12 16"><path d="M.5 .5h7l4 4v11H.5z" fill="url(#gd1)" stroke="#4ea9e6"/><path d="M7.500 .5v4h4" fill="#fff" stroke="#4ea9e6"/><path d="M.5 .5v15h11" fill="none" stroke="#0c5aa6"/><path d="M11.500 15.500V9" fill="none" stroke="#2a7cc8"/><path d="M3 8h6v1h-6zM3 10h6v1h-6zM3 12h6v1h-6z" fill="#0c5aa6" shape-rendering="crispEdges"/></svg></li>
<li><svg class="i" style="left:7px;top:246px" width="6" height="6" viewBox="0 0 6 6"><path d="M5 0h1v1h-1zM4 1h2v1h-2zM3 2h3v1h-3zM2 3h4v1h-4zM1 4h5v1h-5zM0 5h6v1h-6z" fill="#3c3c3c" shape-rendering="crispEdges"/></svg><svg class="i" style="left:22px;top:243px" width="15" height="13" viewBox="0 0 15 13"><rect x=".5" y=".5" width="14" height="12" fill="url(#gn2)" stroke="#3b628f"/><rect x="8" y="2" width="5" height="1" fill="url(#gn1)"/><rect x="8" y="4" width="5" height="1" fill="url(#gn1)"/><rect x="8" y="6" width="5" height="1" fill="url(#gn1)"/><rect x="2" y="8" width="11" height="1" fill="url(#gn1)"/><rect x="2" y="10" width="11" height="1" fill="url(#gn1)"/><path d="M2.600 6.400L4.500 2.600L6.400 6.400M3.400 5.200h2.200" fill="none" stroke="#0c0c14" stroke-width="1.100" stroke-linejoin="round" stroke-linecap="round"/></svg><span class="t" style="left:39.6px;top:241px"><span style="letter-spacing:0.36px">Coporate </span><span style="letter-spacing:0.22px">Memory Layer </span><span style="letter-spacing:-0.11px">(COPORATE </span><span style="letter-spacing:-0.34px">MEMORY LAYER)</span></span></li>
<li><svg class="i" style="left:42px;top:262px" width="16" height="15" viewBox="0 0 16 15"><rect x=".5" y=".5" width="15" height="14" rx="1.500" fill="#c9c9c9" stroke="#b4b4b4"/><rect x="1" y="1" width="10" height="3" fill="#fdfdfd"/><rect x="1" y="4" width="10" height="3" fill="#4b9fe2"/><rect x="1" y="7" width="10" height="3" fill="#f3f3f3"/><rect x="1" y="11" width="10" height="3" fill="#f0f0f0"/><rect x="12" y="1" width="3" height="3" fill="#fbfbfb"/><rect x="12" y="4" width="3" height="6" fill="#c2c2c2"/><rect x="12" y="11" width="3" height="3" fill="#f6f6f6"/><path d="M2 2h1v1h-1zM2 8h1v1h-1zM2 12h1v1h-1zM13 2h1v1h-1zM13 12h1v1h-1z" fill="#555" shape-rendering="crispEdges"/><path d="M2 5h1v1h-1z" fill="#fff" shape-rendering="crispEdges"/><path d="M4 8h6v1h-6zM4 12h6v1h-6z" fill="#e2e2e2" shape-rendering="crispEdges"/><path d="M4 5h6v1h-6z" fill="#69b0ea" shape-rendering="crispEdges"/></svg><span class="t" style="left:59.3px;top:261px"><span style="letter-spacing:-0.13px">BW </span><span style="letter-spacing:0.38px">Entity </span><span style="letter-spacing:0.04px">List (BW </span><span style="letter-spacing:-0.12px">ENTITY LIST)</span></span></li>
<li><svg class="i" style="left:27px;top:286px" width="6" height="6" viewBox="0 0 6 6"><path d="M5 0h1v1h-1zM4 1h2v1h-2zM3 2h3v1h-3zM2 3h4v1h-4zM1 4h5v1h-5zM0 5h6v1h-6z" fill="#3c3c3c" shape-rendering="crispEdges"/></svg><svg class="i" style="left:42px;top:283px" width="15" height="13" viewBox="0 0 15 13"><rect x=".5" y=".5" width="14" height="12" fill="url(#gn2)" stroke="#3b628f"/><rect x="8" y="2" width="5" height="1" fill="url(#gn1)"/><rect x="8" y="4" width="5" height="1" fill="url(#gn1)"/><rect x="8" y="6" width="5" height="1" fill="url(#gn1)"/><rect x="2" y="8" width="11" height="1" fill="url(#gn1)"/><rect x="2" y="10" width="11" height="1" fill="url(#gn1)"/><path d="M2.600 6.400L4.500 2.600L6.400 6.400M3.400 5.200h2.200" fill="none" stroke="#0c0c14" stroke-width="1.100" stroke-linejoin="round" stroke-linecap="round"/></svg><span class="t" style="left:59.6px;top:281px"><span style="letter-spacing:0.21px">Technical Documentation </span><span style="letter-spacing:0.36px">Coporate </span><span style="letter-spacing:0.23px">Memory Layer </span><span style="letter-spacing:-0.07px">(TECHNICAL DOCUMENTATION </span><span style="letter-spacing:-0.18px">COPORATE </span><span style="letter-spacing:-0.34px">MEMORY LAYER)</span></span><svg class="i" style="left:598px;top:283px" width="14" height="11" viewBox="0 0 14 11"><path d="M.5 2.500v6.200c0 1 2.900 1.800 6.500 1.800s6.500-.8 6.500-1.800V2.500z" fill="url(#gy1)" stroke="#2456ad"/><path d="M1 9c1.200 .8 3.300 1.200 6 1.200s4.800-.4 6-1.200" fill="none" stroke="#0f3f97" stroke-width="1"/><ellipse cx="7" cy="2.600" rx="6.500" ry="2.100" fill="#e6effc" stroke="#5f87c9"/><ellipse cx="7" cy="2.300" rx="5" ry="1.100" fill="#f6f9fe"/></svg><span class="t" style="left:615.9px;top:279px">(</span><svg class="i" style="left:624px;top:281px" width="14" height="14" viewBox="0 0 14 14"><path d="M.2 1.300A.8 .8 0 0 1 1 .5H5.600L13.300 8.200a.7 .7 0 0 1 0 1L9 13.500a.7 .7 0 0 1-1 0L.2 5.800z" fill="#1f97fb"/><path d="M6 5.500L10.500 10M5 7L9 11M7.500 5L11.500 9" stroke="#74c4ff" stroke-width=".9" stroke-dasharray="1 1" fill="none"/><rect x="2" y="2" width="2" height="2" fill="#f0c6a4"/></svg><span class="t" style="left:641.2px;top:279px"><span style="letter-spacing:0.55px">Tech. </span><span style="letter-spacing:0.29px">Name </span><span style="letter-spacing:1.17px">= </span><span style="letter-spacing:-0.27px">"C" </span><span style="letter-spacing:0.2px">on Pos. </span><span style="letter-spacing:1.05px">5 </span><span style="letter-spacing:-0.41px">- </span><span style="letter-spacing:0.69px">InfoArea </span><span style="letter-spacing:1.17px">= </span><span style="letter-spacing:-0.3px">"ZMMPURDW" )</span></span></li>
<li><svg class="i" style="left:63px;top:305px" width="14" height="11" viewBox="0 0 14 11"><path d="M.5 2.500v6.200c0 1 2.900 1.800 6.500 1.800s6.500-.8 6.500-1.800V2.500z" fill="url(#gy1)" stroke="#2456ad"/><path d="M1 9c1.200 .8 3.300 1.200 6 1.200s4.800-.4 6-1.200" fill="none" stroke="#0f3f97" stroke-width="1"/><ellipse cx="7" cy="2.600" rx="6.500" ry="2.100" fill="#e6effc" stroke="#5f87c9"/><ellipse cx="7" cy="2.300" rx="5" ry="1.100" fill="#f6f9fe"/></svg><span class="t" style="left:79.6px;top:301px"><span style="letter-spacing:-0.19px">CM MM-PUR: </span><span style="letter-spacing:0.04px">Purchase Doc. </span><span style="letter-spacing:0.21px">Header </span><span style="letter-spacing:-0.07px">(ZPU_OO_HDR) (ZPURDW10) </span><span style="letter-spacing:0.29px">(A4H)</span></span><svg class="i" style="left:428px;top:301px" width="17" height="15" viewBox="0 0 17 15"><path d="M2.400 .6h11.200a1.800 1.800 0 0 1 1.800 1.800v6.200a1.800 1.800 0 0 1-1.800 1.800H12.400V13.400L9 10.400H2.400a1.800 1.800 0 0 1-1.800-1.800V2.400a1.800 1.800 0 0 1 1.800-1.800z" fill="url(#gm1)" stroke="#686868" stroke-width="1.150" stroke-linejoin="round"/></svg><svg class="i" style="left:449px;top:300px" width="12" height="16" viewBox="0 0 12 16"><path d="M.5 .5h7l4 4v11H.5z" fill="url(#gd1)" stroke="#4ea9e6"/><path d="M7.500 .5v4h4" fill="#fff" stroke="#4ea9e6"/><path d="M.5 .5v15h11" fill="none" stroke="#0c5aa6"/><path d="M11.500 15.500V9" fill="none" stroke="#2a7cc8"/><path d="M3 8h6v1h-6zM3 10h6v1h-6zM3 12h6v1h-6z" fill="#0c5aa6" shape-rendering="crispEdges"/></svg></li>
</ul>
<div class="hl" style="left:21px;top:57px;width:759px;height:185px"></div>
</div>
<div class="sb" style="left:829px;top:2px;width:17px;height:308px"><div class="sbb" style="left:1px;top:1px;width:15px;height:15px"><svg class="i" style="left:4px;top:5px" width="7" height="4" viewBox="0 0 7 4"><path d="M3 0h1v1h-1zM2 1h3v1h-3zM1 2h5v1h-5zM0 3h7v1h-7z" fill="#3a3a3a" shape-rendering="crispEdges"/></svg></div><div class="sbt" style="left:1px;top:60px;width:15px;height:76px"></div><div class="sbb" style="left:1px;top:292px;width:15px;height:15px"><svg class="i" style="left:4px;top:6px" width="7" height="4" viewBox="0 0 7 4"><path d="M0 0h7v1h-7zM1 1h5v1h-5zM2 2h3v1h-3zM3 3h1v1h-1z" fill="#3a3a3a" shape-rendering="crispEdges"/></svg></div></div>
</div>
</div>
</div>
</body>
</html>
